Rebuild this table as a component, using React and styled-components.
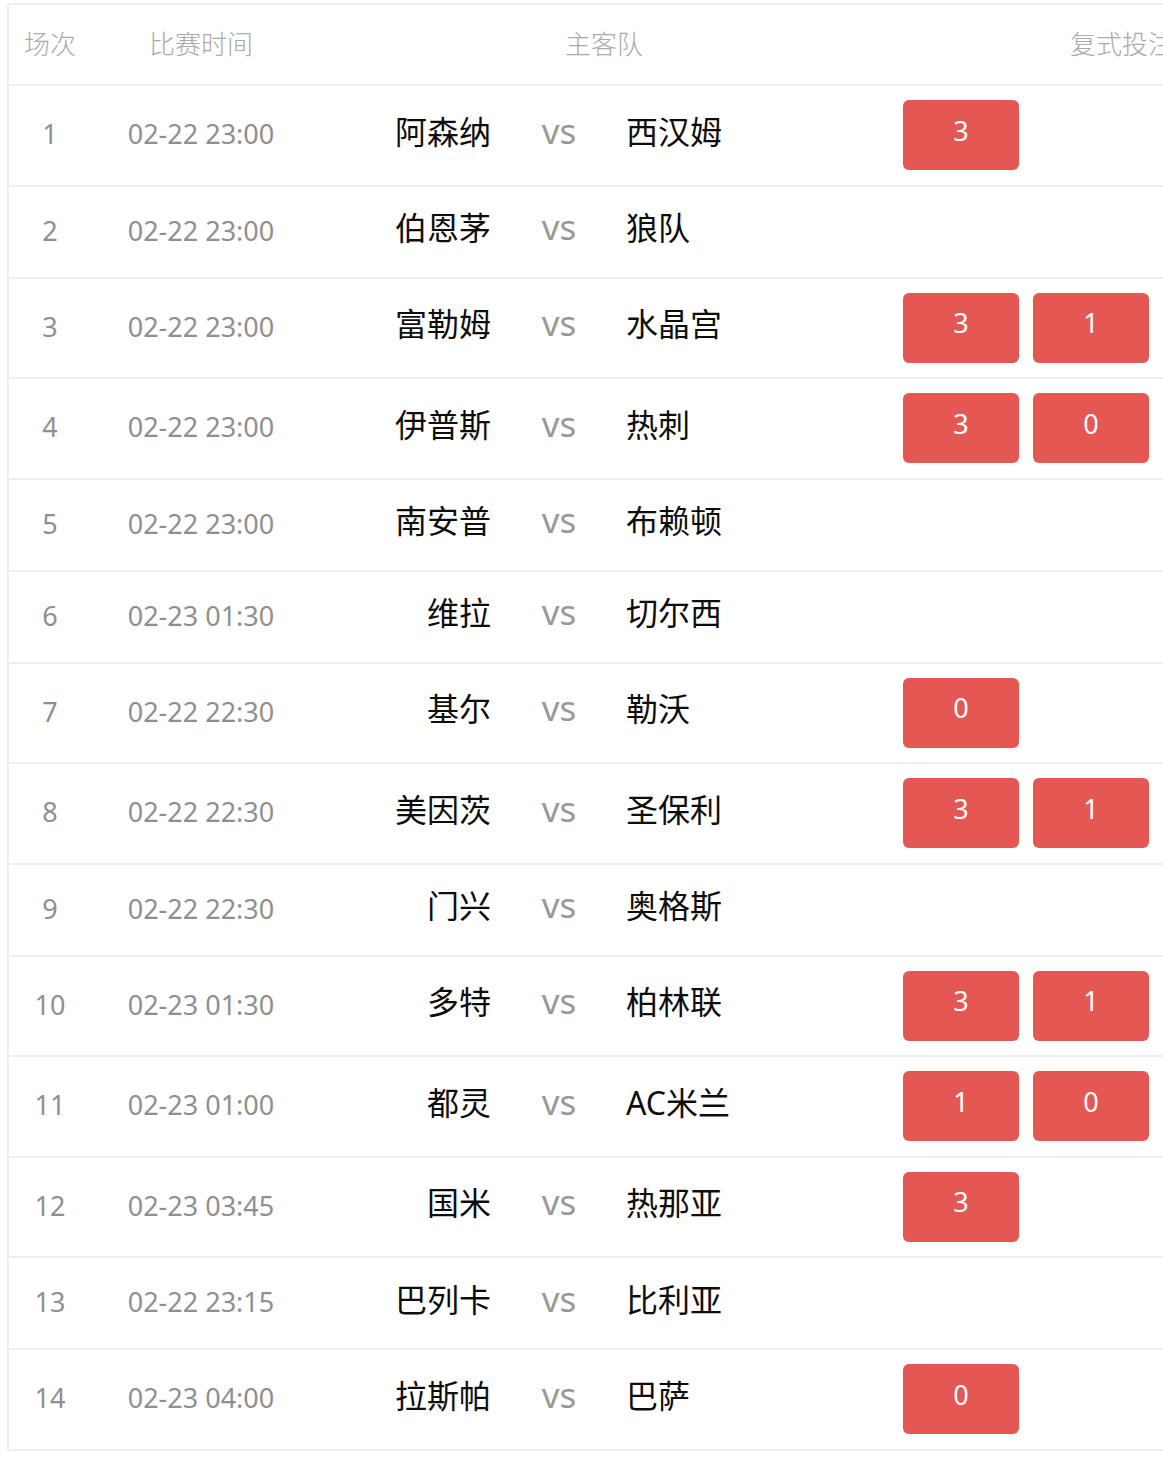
import React from "react";
import styled, { createGlobalStyle } from "styled-components";

const GlobalStyle = createGlobalStyle`
  html, body {
    margin: 0;
    padding: 0;
    background: #fff;
    overflow: hidden;
  }
  body {
    font-family: "Noto Sans", "Noto Sans CJK SC", sans-serif;
  }
`;

const matches = [
  { no: 1, time: "02-22 23:00", home: "阿森纳", away: "西汉姆", picks: ["3"] },
  { no: 2, time: "02-22 23:00", home: "伯恩茅", away: "狼队", picks: [] },
  { no: 3, time: "02-22 23:00", home: "富勒姆", away: "水晶宫", picks: ["3", "1"] },
  { no: 4, time: "02-22 23:00", home: "伊普斯", away: "热刺", picks: ["3", "0"] },
  { no: 5, time: "02-22 23:00", home: "南安普", away: "布赖顿", picks: [] },
  { no: 6, time: "02-23 01:30", home: "维拉", away: "切尔西", picks: [] },
  { no: 7, time: "02-22 22:30", home: "基尔", away: "勒沃", picks: ["0"] },
  { no: 8, time: "02-22 22:30", home: "美因茨", away: "圣保利", picks: ["3", "1"] },
  { no: 9, time: "02-22 22:30", home: "门兴", away: "奥格斯", picks: [] },
  { no: 10, time: "02-23 01:30", home: "多特", away: "柏林联", picks: ["3", "1"] },
  { no: 11, time: "02-23 01:00", home: "都灵", away: "AC米兰", picks: ["1", "0"] },
  { no: 12, time: "02-23 03:45", home: "国米", away: "热那亚", picks: ["3"] },
  { no: 13, time: "02-22 23:15", home: "巴列卡", away: "比利亚", picks: [] },
  { no: 14, time: "02-23 04:00", home: "拉斯帕", away: "巴萨", picks: ["0"] },
];

const App = () => {
  return (
    <>
      <GlobalStyle />
      <Table>
        <HeadRow>
          <HeadCell>场次</HeadCell>
          <HeadCell>比赛时间</HeadCell>
          <HeadCell $span>主客队</HeadCell>
          <HeadCell>复式投注</HeadCell>
        </HeadRow>
        {matches.map((m) => (
          <Row key={m.no}>
            <NumCell>{m.no}</NumCell>
            <TimeCell>{m.time}</TimeCell>
            <Team $align="right">{m.home}</Team>
            <Vs>vs</Vs>
            <Team $align="left">{m.away}</Team>
            <Picks>
              {m.picks.map((p, i) => (
                <Pick key={i}>{p}</Pick>
              ))}
            </Picks>
          </Row>
        ))}
      </Table>
    </>
  );
};

export default App;

const cols = "82px 220px 180px 136px 270px 450px";

const Table = styled.div`
  margin: 3px 0 0 7px;
  width: 1340px;
  border-top: 2px solid #efefef;
  border-left: 2px solid #efefef;
`;

const HeadRow = styled.div`
  display: grid;
  grid-template-columns: ${cols};
  height: 79px;
  border-bottom: 2px solid #efefef;
  align-items: center;
`;

const HeadCell = styled.div`
  grid-column: ${(p) => (p.$span ? "span 3" : "auto")};
  text-align: center;
  font-family: "Noto Sans CJK SC", sans-serif;
  font-weight: 300;
  font-size: 26px;
  color: #aaa;
  margin-top: -4px;
`;

const Row = styled.div`
  display: grid;
  grid-template-columns: ${cols};
  min-height: 90px;
  border-bottom: 2px solid #efefef;
  align-items: center;
`;

const NumCell = styled.div`
  text-align: center;
  font-size: 27px;
  color: #8f8f8f;
  margin-top: -3px;
`;

const TimeCell = styled.div`
  text-align: center;
  font-size: 27px;
  color: #8f8f8f;
  margin-top: -3px;
`;

const Team = styled.div`
  text-align: ${(p) => p.$align};
  font-family: "Noto Sans", "Noto Sans CJK SC", sans-serif;
  font-size: 32px;
  color: #0d0d0d;
  margin-top: -11px;
  margin-left: ${(p) => (p.$align === "left" ? "-1px" : "0")};
`;

const Vs = styled.div`
  text-align: center;
  font-size: 35px;
  color: #999;
  margin-top: -10px;
`;

const Picks = styled.div`
  display: flex;
  gap: 14px;
  padding: 14.25px 0 14.25px 6px;
`;

const Pick = styled.div`
  width: 116px;
  height: 70px;
  border-radius: 6px;
  background: #e55753;
  color: #fff;
  font-size: 27px;
  display: flex;
  align-items: center;
  justify-content: center;
  padding-bottom: 10px;
  box-sizing: border-box;
`;
